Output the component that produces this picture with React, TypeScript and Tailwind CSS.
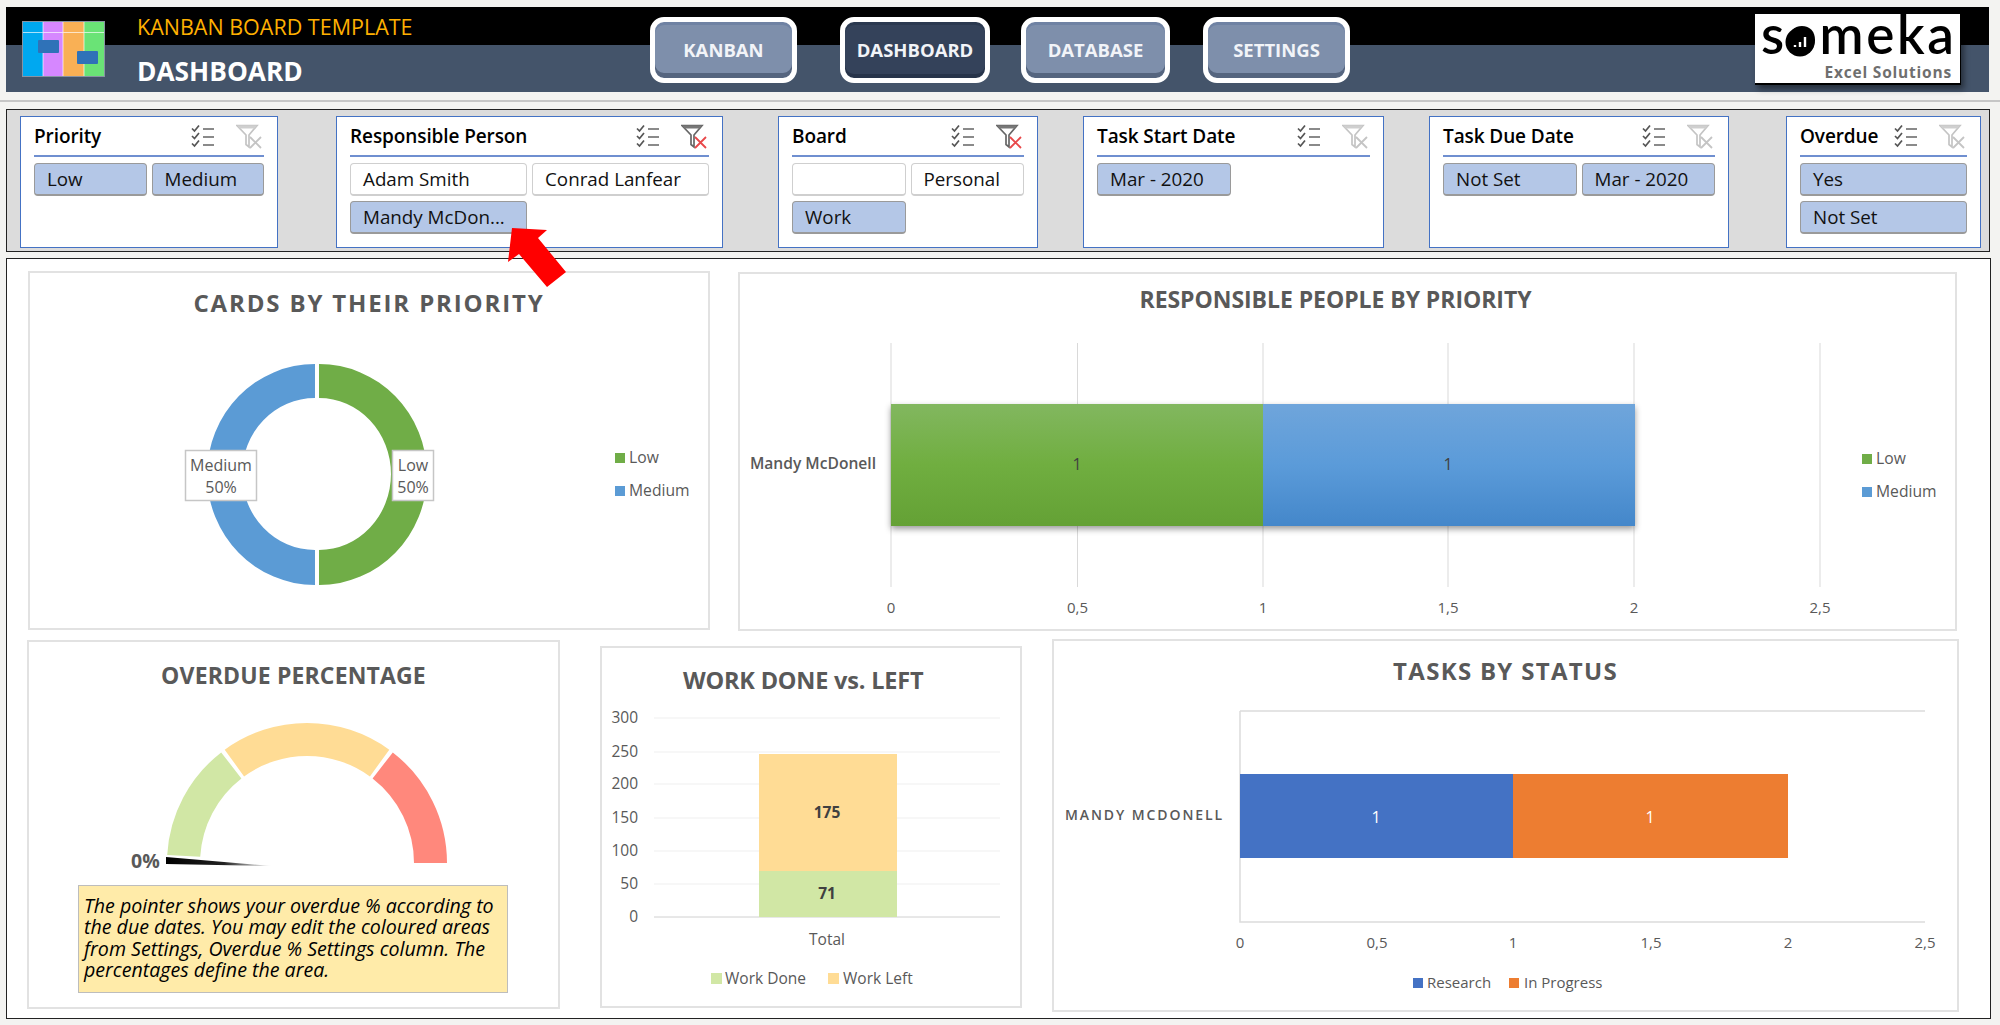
import React from "react"

// gauge arcs are measured in degrees from the left end of the half circle
const pt = (r: number, deg: number) => {
  const a = (deg * Math.PI) / 180
  return `${(307 - r * Math.cos(a)).toFixed(1)} ${(863 - r * Math.sin(a)).toFixed(1)}`
}
const gaugeArc = (a0: number, a1: number) =>
  `M${pt(140, a0)} A140 140 0 0 1 ${pt(140, a1)} L${pt(107, a1)} A107 107 0 0 0 ${pt(107, a0)} Z`

function ChecklistIcon() {
  return (
    <svg viewBox="0 0 24 24" className="w-[24px] h-[24px]" fill="none" strokeWidth="1.7">
      <path d="M1 4.5l2.5 2.5L8 1.5M1 12l2.5 2.5L8 9M1 19.5L3.5 22 8 16.5" stroke="#555" />
      <path d="M12 5h11M12 13h11M12 21h11" stroke="#8a8a8a" strokeWidth="2" />
    </svg>
  )
}

function FilterIcon({ active }: { active?: boolean }) {
  return (
    <svg viewBox="0 0 26 25" className="w-[26px] h-[25px]" fill="none">
      <path
        d="M1 1.5h20L13 11v12l-3-2.5V11z"
        stroke={active ? "#666" : "#c4c4c4"}
        strokeWidth="1.7"
        fill="#fff"
      />
      <path d="M1 1.5h20l-2.5 3h-15z" fill={active ? "#777" : "#cfcfcf"} />
      <path
        d="M14 13l11 11M25 13L14 24"
        stroke={active ? "#e8484a" : "#c4c4c4"}
        strokeWidth="1.8"
      />
    </svg>
  )
}

interface SlicerProps {
  title: string
  items: { label: string; on?: boolean }[]
  active?: boolean
  oneCol?: boolean
  className: string
}

function Slicer({ title, items, active, oneCol, className }: SlicerProps) {
  return (
    <div className={`h-[132px] bg-white border border-[#4472c4] px-[13px] shrink-0 ${className}`}>
      <div className="h-[38px] flex items-center border-b-2 border-[#6f8fd0] box-content">
        <span className="text-[19px] leading-none font-semibold text-black whitespace-nowrap tracking-[-0.1px]">{title}</span>
        <span className="ml-auto mr-[2px] flex items-center gap-[21px]">
          <ChecklistIcon />
          <FilterIcon active={active} />
        </span>
      </div>
      <div className={`grid gap-[5px] mt-[6px] ${oneCol ? "grid-cols-1" : "grid-cols-2"}`}>
        {items.map((it, i) => (
          <div
            key={i}
            className={`h-[33px] rounded-[4px] border px-[12px] flex items-center text-[18.8px] leading-none text-[#111] whitespace-nowrap overflow-hidden ${
              it.on
                ? "bg-[#b4c7e7] border-[#9a9a9a] border-b-2"
                : "bg-white border-[#cfcfcf] border-b-2"
            }`}
          >
            {it.label}
          </div>
        ))}
      </div>
    </div>
  )
}

function NavButton({ label, current, className }: { label: string; current?: boolean; className: string }) {
  return (
    <button
      className={`h-[66px] mt-[10px] shrink-0 rounded-[14px] border-[5px] border-white flex items-center justify-center text-[18.5px] font-bold text-[#f2f4f8] ${
        current
          ? "bg-[#34425a] shadow-[inset_0_3px_0_#2b3950,inset_0_-4px_0_#27344a]"
          : "bg-[#7e8fab] shadow-[inset_0_3px_0_#6f82a3,inset_0_-5px_0_#55657f]"
      } ${className}`}
    >
      {label}
    </button>
  )
}

function KanbanLogo() {
  return (
    <svg viewBox="0 0 83 56" className="w-[83px] h-[56px] mt-[14px] ml-[16px] shrink-0">
      <rect x="0" y="0" width="21" height="56" fill="#00a8f0" />
      <rect x="21" y="0" width="20" height="56" fill="#d687ff" />
      <rect x="41" y="0" width="21" height="56" fill="#f9b055" />
      <rect x="62" y="0" width="21" height="56" fill="#6ae376" />
      <path d="M21 0v56M41 0v56M62 0v56M0 11.5h83" stroke="#fff" strokeWidth="0.9" opacity="0.75" />
      <rect x="16" y="19" width="21" height="13" rx="1" fill="#2f72b8" />
      <rect x="55" y="30" width="21" height="13" rx="1" fill="#2f72b8" />
      <rect x="0.5" y="0.5" width="82" height="55" fill="none" stroke="#8893a3" />
    </svg>
  )
}

function SomekaLogo() {
  return (
    <div className="relative w-[206px] h-[71px] mt-[7px] ml-auto mr-[28px] shrink-0 bg-white border-b-2 border-r border-black shadow-[3px_4px_6px_rgba(0,0,0,0.45)]">
      <span className="absolute left-[6px] top-[0px] text-[53px] leading-[40px] font-['Lato',sans-serif] font-semibold tracking-[2.6px] text-black">
        someka
      </span>
      <svg viewBox="0 0 30 30" className="absolute left-[30px] top-[13px] w-[30px] h-[30px]">
        <circle cx="15" cy="15" r="14.5" fill="#000" />
        <path d="M10 20v-2M15 20v-5M20 20V10" stroke="#fff" strokeWidth="2.4" />
      </svg>
      <span className="absolute right-[8px] bottom-[1px] text-[15.5px] leading-[20px] font-bold tracking-[0.8px] text-[#6f6f6f]">
        Excel Solutions
      </span>
    </div>
  )
}

function ChartTitle({ children, className }: { children: React.ReactNode; className: string }) {
  return <div className={`font-bold text-[#595959] whitespace-nowrap leading-none ${className}`}>{children}</div>
}

function PriorityDonut() {
  return (
    <div className="w-[682px] h-[359px] shrink-0 ml-[21px] border-2 border-[#e2e2e2]">
      <ChartTitle className="text-[24px] tracking-[1.85px] h-[48px] pt-[18px] text-center">CARDS BY THEIR PRIORITY</ChartTitle>
      <svg viewBox="30 321 678 307" className="w-[678px] h-[307px]">
        <path d="M319 364 A108 110.5 0 0 1 319 585 L319 550 A72 76 0 0 0 319 398 Z" fill="#70ad47" />
        <path d="M315 364 A108 110.5 0 0 0 315 585 L315 550 A73 76 0 0 1 315 398 Z" fill="#5b9bd5" />
        <rect x="185.5" y="450.5" width="71" height="50" fill="#fff" stroke="#c6c6c6" strokeWidth="1.5" />
        <rect x="392.5" y="450.5" width="41" height="50" fill="#fff" stroke="#c6c6c6" strokeWidth="1.5" />
        <g fontSize="16" fill="#595959" textAnchor="middle">
          <text x="221" y="471">Medium</text>
          <text x="221" y="493">50%</text>
          <text x="413" y="471">Low</text>
          <text x="413" y="493">50%</text>
        </g>
        <rect x="615" y="453" width="10" height="10" fill="#70ad47" />
        <rect x="615" y="486" width="10" height="10" fill="#5b9bd5" />
        <g fontSize="15.7" fill="#595959">
          <text x="629" y="463">Low</text>
          <text x="629" y="496">Medium</text>
        </g>
      </svg>
    </div>
  )
}

function ResponsibleChart() {
  const ticks: [number, string][] = [
    [891, "0"],
    [1077.5, "0,5"],
    [1263, "1"],
    [1448, "1,5"],
    [1634, "2"],
    [1820, "2,5"],
  ]
  return (
    <div className="w-[1219px] h-[359px] shrink-0 ml-[28px] mt-[1px] border-2 border-[#e2e2e2]">
      <ChartTitle className="text-[23px] tracking-[-0.05px] h-[48px] pt-[14px] pr-[24px] text-center">RESPONSIBLE PEOPLE BY PRIORITY</ChartTitle>
      <svg viewBox="740 322 1215 307" className="w-[1215px] h-[307px]">
        <defs>
          <linearGradient id="lowBar" x1="0" y1="0" x2="0" y2="1">
            <stop offset="0" stopColor="#82b75f" />
            <stop offset="0.5" stopColor="#70ae40" />
            <stop offset="1" stopColor="#64a135" />
          </linearGradient>
          <linearGradient id="medBar" x1="0" y1="0" x2="0" y2="1">
            <stop offset="0" stopColor="#6fa5db" />
            <stop offset="0.5" stopColor="#5b9bd9" />
            <stop offset="1" stopColor="#4487ca" />
          </linearGradient>
        </defs>
        {ticks.map(([x, t]) => (
          <g key={t}>
            <path d={`M${x} 343V587`} stroke="#d9d9d9" />
            <text x={x} y="613" fontSize="15" fill="#595959" textAnchor="middle">{t}</text>
          </g>
        ))}
        <g className="drop-shadow-[0_3px_3px_rgba(0,0,0,0.4)]">
          <rect x="891" y="404" width="372" height="122" fill="url(#lowBar)" />
          <rect x="1263" y="404" width="372" height="122" fill="url(#medBar)" />
        </g>
        <text x="1077" y="470" fontSize="16" fill="#404040" textAnchor="middle">1</text>
        <text x="1448" y="470" fontSize="16" fill="#404040" textAnchor="middle">1</text>
        <text x="876" y="469" fontSize="15.6" fontWeight="600" fill="#595959" textAnchor="end">Mandy McDonell</text>
        <rect x="1862" y="454" width="10" height="10" fill="#70ad47" />
        <rect x="1862" y="487" width="10" height="10" fill="#5b9bd5" />
        <g fontSize="15.7" fill="#595959">
          <text x="1876" y="464">Low</text>
          <text x="1876" y="497">Medium</text>
        </g>
      </svg>
    </div>
  )
}

function OverdueGauge() {
  return (
    <div className="w-[533px] h-[369px] shrink-0 ml-[20px] mt-[1px] border-2 border-[#e2e2e2]">
      <ChartTitle className="text-[23px] tracking-[0.15px] h-[56px] pt-[22px] text-center">OVERDUE PERCENTAGE</ChartTitle>
      <svg viewBox="29 698 529 180" className="w-[529px] h-[180px]">
        <defs>
          <linearGradient id="needle" x1="0" y1="0" x2="1" y2="0">
            <stop offset="0" stopColor="#000" />
            <stop offset="0.55" stopColor="#222" />
            <stop offset="1" stopColor="#fff" />
          </linearGradient>
        </defs>
        <path d={gaugeArc(3.3, 52.2)} fill="#d1e7a5" />
        <path d={gaugeArc(54, 126)} fill="#ffdc95" />
        <path d={gaugeArc(127.8, 180)} fill="#ff887c" />
        <polygon points="166,857 166,864 272,866" fill="url(#needle)" />
        <text x="131" y="868" fontSize="19.5" fontWeight="700" fill="#595959">0%</text>
      </svg>
      <div className="w-[430px] h-[108px] ml-[49px] mt-[7px] bg-[#ffeba9] border border-[#bdbdbd] pl-[5px] pt-[9px] text-[19.6px] leading-[21.3px] italic text-black">
        The pointer shows your overdue % according to the due dates. You may edit the coloured areas from Settings, Overdue % Settings column. The percentages define the area.
      </div>
    </div>
  )
}

function WorkDoneChart() {
  const rows: [number, string][] = [
    [718, "300"],
    [752, "250"],
    [784, "200"],
    [818, "150"],
    [851, "100"],
    [884, "50"],
    [917, "0"],
  ]
  return (
    <div className="w-[422px] h-[362px] shrink-0 ml-[40px] mt-[7px] border-2 border-[#e2e2e2]">
      <ChartTitle className="text-[23.5px] tracking-[-0.2px] h-[56px] pt-[21px] pl-[81px]">WORK DONE vs. LEFT</ChartTitle>
      <svg viewBox="602 704 418 302" className="w-[418px] h-[302px]">
        {rows.map(([y, t]) => (
          <g key={t}>
            <path d={`M654 ${y}H1000`} stroke={t === "0" ? "#d0d0d0" : "#efefef"} />
            <text x="638" y={y + 5} fontSize="15.5" fill="#595959" textAnchor="end">{t}</text>
          </g>
        ))}
        <rect x="759" y="754" width="138" height="117" fill="#ffdc95" />
        <rect x="759" y="871" width="138" height="46" fill="#d1e7a5" />
        <text x="827" y="818" fontSize="15.5" fontWeight="700" fill="#404040" textAnchor="middle">175</text>
        <text x="827" y="899" fontSize="15.5" fontWeight="700" fill="#404040" textAnchor="middle">71</text>
        <text x="827" y="945" fontSize="15.5" fill="#595959" textAnchor="middle">Total</text>
        <rect x="711" y="973" width="11" height="11" fill="#d1e7a5" />
        <rect x="828" y="973" width="11" height="11" fill="#ffdc95" />
        <text x="725" y="984" fontSize="15.5" fill="#595959">Work Done</text>
        <text x="843" y="984" fontSize="15.5" fill="#595959">Work Left</text>
      </svg>
    </div>
  )
}

function StatusChart() {
  const ticks: [number, string][] = [
    [1240, "0"],
    [1377, "0,5"],
    [1513, "1"],
    [1651, "1,5"],
    [1788, "2"],
    [1925, "2,5"],
  ]
  return (
    <div className="w-[907px] h-[373px] shrink-0 ml-[30px] border-2 border-[#e2e2e2]">
      <ChartTitle className="text-[24px] tracking-[1.3px] h-[56px] pt-[18px] text-center">TASKS BY STATUS</ChartTitle>
      <svg viewBox="1054 697 903 314" className="w-[903px] h-[314px]">
        <path d="M1240 711V922H1925M1240 711H1925" fill="none" stroke="#dcdcdc" strokeWidth="1.5" />
        <rect x="1240" y="774" width="273" height="84" fill="#4472c4" />
        <rect x="1513" y="774" width="275" height="84" fill="#ed7d31" />
        <text x="1376" y="823" fontSize="16" fill="#fff" textAnchor="middle">1</text>
        <text x="1650" y="823" fontSize="16" fill="#fff" textAnchor="middle">1</text>
        <text x="1224" y="820" fontSize="14" fontWeight="600" letterSpacing="1.9" fill="#595959" textAnchor="end">MANDY MCDONELL</text>
        {ticks.map(([x, t]) => (
          <text key={t} x={x} y="948" fontSize="15" fill="#595959" textAnchor="middle">{t}</text>
        ))}
        <rect x="1413" y="978" width="10" height="10" fill="#4472c4" />
        <rect x="1509" y="978" width="10" height="10" fill="#ed7d31" />
        <g fontSize="15" fill="#595959">
          <text x="1427" y="988">Research</text>
          <text x="1524" y="988">In Progress</text>
        </g>
      </svg>
    </div>
  )
}

export default function App() {
  return (
    <div className="relative w-[2000px] h-[1025px] overflow-hidden bg-[#f3f3f1] pt-[7px] font-['Open_Sans',sans-serif]">
      {/* Header */}
      <div className="ml-[6px] w-[1983px] h-[85px] flex bg-[linear-gradient(#000_0,#000_38px,#44546a_38px,#44546a_100%)]">
        <KanbanLogo />
        <div className="ml-[32px] w-[513px] shrink-0">
          <div className="mt-[6px] text-[21.5px] leading-[28px] text-[#ffb000] whitespace-nowrap">KANBAN BOARD TEMPLATE</div>
          <div className="mt-[16px] text-[26.3px] leading-[28px] font-bold text-white whitespace-nowrap">DASHBOARD</div>
        </div>
        <NavButton label="KANBAN" className="w-[147px]" />
        <NavButton label="DASHBOARD" current className="w-[150px] ml-[43px]" />
        <NavButton label="DATABASE" className="w-[149px] ml-[31px]" />
        <NavButton label="SETTINGS" className="w-[147px] ml-[33px]" />
        <SomekaLogo />
      </div>
      <div className="h-[2px] mt-[8px] bg-[#c6c6c6]" />

      {/* Slicers */}
      <div className="ml-[6px] mt-[7px] w-[1984px] h-[143px] bg-[#dcdcdc] border border-[#222] pl-[13px] pt-[6px] flex">
        <Slicer title="Priority" className="w-[258px]" items={[{ label: "Low", on: true }, { label: "Medium", on: true }]} />
        <Slicer
          title="Responsible Person"
          active
          className="w-[387px] ml-[58px]"
          items={[{ label: "Adam Smith" }, { label: "Conrad Lanfear" }, { label: "Mandy McDon...", on: true }]}
        />
        <Slicer
          title="Board"
          active
          className="w-[260px] ml-[55px]"
          items={[{ label: "\u00a0" }, { label: "Personal" }, { label: "Work", on: true }]}
        />
        <Slicer title="Task Start Date" className="w-[301px] ml-[45px]" items={[{ label: "Mar - 2020", on: true }]} />
        <Slicer
          title="Task Due Date"
          className="w-[300px] ml-[45px]"
          items={[{ label: "Not Set", on: true }, { label: "Mar - 2020", on: true }]}
        />
        <Slicer
          title="Overdue"
          oneCol
          className="w-[195px] ml-[57px]"
          items={[{ label: "Yes", on: true }, { label: "Not Set", on: true }]}
        />
      </div>

      {/* Charts */}
      <div className="ml-[6px] mt-[6px] w-[1985px] h-[761px] bg-white border border-[#222] pt-[12px]">
        <div className="flex items-start">
          <PriorityDonut />
          <ResponsibleChart />
        </div>
        <div className="flex items-start mt-[8px]">
          <OverdueGauge />
          <WorkDoneChart />
          <StatusChart />
        </div>
      </div>

      {/* Callout arrow over the slicer */}
      <svg viewBox="0 0 2000 1025" className="absolute inset-0 w-[2000px] h-[1025px] pointer-events-none">
        <polygon points="512,228 547,230 538,238 566,272 547,287 519,254 508,262" fill="#ff0000" />
      </svg>
    </div>
  )
}
